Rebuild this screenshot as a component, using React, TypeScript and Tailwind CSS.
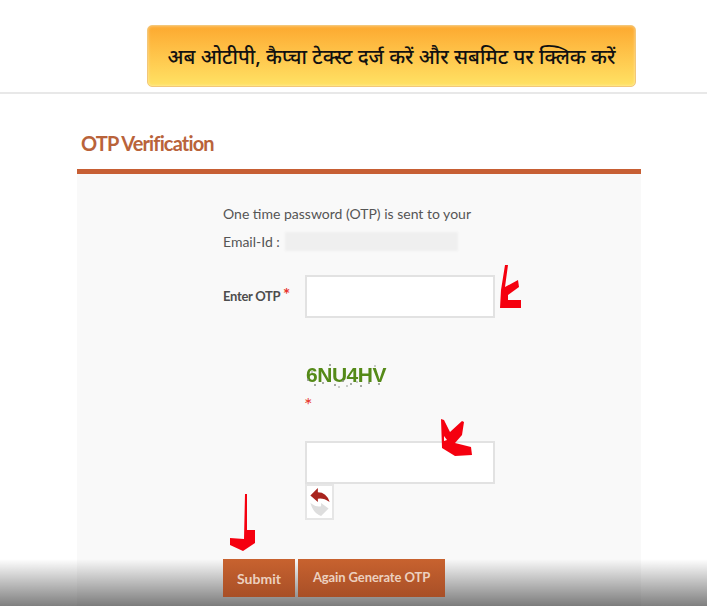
import React from "react";

function Scribbles() {
  return (
    <svg className="absolute left-0 top-0 z-20 pointer-events-none" width="707" height="606" viewBox="0 0 707 606" fill="#f5000f">
      {/* arrow beside OTP box */}
      <path d="M505 265 L508 265 L505 287 L518 280 L519 287 L508 295 L508 300 L521 300 L521 308 L500 308 L501 290 Z" />
      {/* arrow on captcha box */}
      <path fillRule="evenodd" d="M441 419 L444 420 L450 432 L462 421 L464 422 L462 435 L455 443 L471 447 L472 455 L455 456 L442 448 Z M444 436 L447 440 L444 441 Z" />
      {/* arrow above submit */}
      <path d="M245 494 L247 494 L247 530 L255 530 L255 543 L243 551 L230 545 L230 538 L244 539 Z" />
    </svg>
  );
}

function Captcha() {
  return (
    <div className="relative w-[86px] h-[30px] flex items-center justify-center overflow-hidden">
      <span className="text-[21px] font-bold tracking-[-0.5px] text-[#558a18] font-['Liberation_Sans',sans-serif] blur-[0.6px]">6NU4HV</span>
      <svg className="absolute inset-0 blur-[0.4px]" width="86" height="30" fill="#8a8f86">
        <circle cx="5" cy="20" r="1" /><circle cx="12" cy="25" r="1" /><circle cx="20" cy="23" r="1" />
        <circle cx="27" cy="5" r="1" /><circle cx="32" cy="25" r="1" /><circle cx="40" cy="21" r="1" />
        <circle cx="48" cy="24" r="1" /><circle cx="58" cy="26" r="1" /><circle cx="66" cy="23" r="1" />
        <circle cx="76" cy="24" r="1" /><circle cx="9" cy="12" r="0.8" /><circle cx="72" cy="6" r="0.8" />
        <circle cx="36" cy="27" r="0.8" /><circle cx="44" cy="26" r="0.8" /><circle cx="54" cy="22" r="0.8" />
      </svg>
    </div>
  );
}

export default function App() {
  return (
    <div className="relative w-[707px] h-[606px] overflow-hidden bg-white flex flex-col font-['Lato',sans-serif] text-[#444]">
      <div className="h-[94px] shrink-0 border-b-2 border-[#e8e8e8] pl-[147px] pt-[25px]">
        <div className="w-[489px] h-[62px] rounded-[5px] border border-[#f3c779] bg-gradient-to-b from-[#fca92f] to-[#ffe264] shadow-[inset_0_0_3px_#ffffff80] flex items-center justify-center text-[20.25px] font-medium text-[#111] font-['Noto_Sans','DejaVu_Sans',sans-serif]">
          अब ओटीपी, कैप्चा टेक्स्ट दर्ज करें और सबमिट पर क्लिक करें
        </div>
      </div>

      <div className="pl-[81px] pt-[35px] h-[75px] shrink-0">
        <h1 className="text-[20px] leading-[28px] font-bold text-[#b9633a] tracking-[-0.85px]">OTP Verification</h1>
      </div>

      <div className="ml-[77px] w-[564px] flex-1 border-t-[5px] border-[#c75f34] bg-[#f9f9f9] pl-[146px] pt-[30px]">
        <p className="text-[14px] leading-[20px] text-[#555]">One time password (OTP) is sent to your</p>
        <div className="mt-[7px] flex items-center h-[20px] text-[14px] text-[#555]">
          <span>Email-Id :</span>
          <span className="ml-[5px] w-[173px] h-[19px] bg-[#efefef] blur-[1px]" />
        </div>

        <div className="mt-[24px] flex items-center">
          <label className="w-[82px] text-[13px] font-bold tracking-[-0.3px] text-[#4d4d4d]">
            Enter OTP <span className="text-[17px] leading-[14px] text-[#e8342c]">*</span>
          </label>
          <input className="w-[190px] h-[43px] bg-white border-2 border-[#e2e2e2]" />
        </div>

        <div className="ml-[80px] mt-[42px]">
          <Captcha />
        </div>
        <div className="ml-[81px] mt-[4px] h-[20px] text-[20px] leading-[20px] text-[#e8342c]">*</div>

        <div className="ml-[82px] mt-[27px] flex flex-col">
          <input className="w-[190px] h-[43px] bg-white border-2 border-[#e2e2e2]" />
          <div className="w-[29px] h-[36px] bg-white border-2 border-[#e6e6e6] flex items-center justify-center">
            <svg width="24" height="30" viewBox="0 0 22 28">
              <path d="M2 8 L9 1 L9 5 Q17 5 20 14 Q14 10 9 11 L9 14 Z" fill="#a8241e" />
              <path d="M2 15 Q7 19 12 18 L12 15 L19 20 L12 27 Q5 25 2 15 Z" fill="#dedede" />
            </svg>
          </div>
        </div>

        <div className="relative z-10 mt-[39px] flex gap-[3px]">
          <button className="w-[72px] h-[38px] bg-gradient-to-b from-[#c8622f] to-[#a84f27] text-[14px] font-bold text-[#ecd0bf]">Submit</button>
          <button className="w-[147px] h-[38px] bg-gradient-to-b from-[#c8622f] to-[#a84f27] text-[13px] font-bold tracking-[-0.1px] text-[#ecd0bf]">Again Generate OTP</button>
        </div>
      </div>

      {/* dark fade along the bottom of the frame */}
      <div className="absolute left-0 right-0 bottom-0 h-[47px] pointer-events-none bg-gradient-to-b from-[#00000000] to-[#00000080]" />
      <Scribbles />
    </div>
  );
}
